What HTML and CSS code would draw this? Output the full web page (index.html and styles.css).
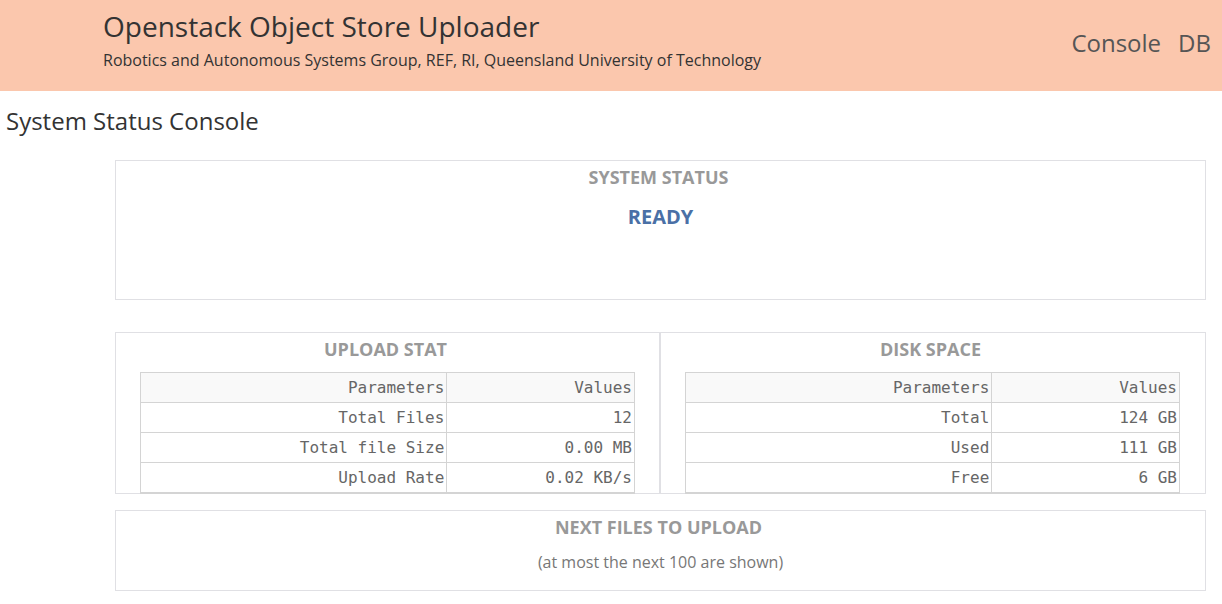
FILE: index.html
```html
<!DOCTYPE html>
<html>
<head>
<meta charset="utf-8">
<link rel="stylesheet" href="styles.css">
</head>
<body>
<header class="topbar">
  <div class="brand">
    <h1 class="brand-title">Openstack Object Store Uploader</h1>
    <p class="brand-sub">Robotics and Autonomous Systems Group, REF, RI, Queensland University of Technology</p>
  </div>
  <nav class="nav">
    <a class="nav-link">Console</a>
    <a class="nav-link">DB</a>
  </nav>
</header>
<main class="page">
  <h2 class="page-title">System Status Console</h2>
  <div class="panels">
    <section class="box status-box">
      <h3 class="box-title">SYSTEM STATUS</h3>
      <div class="status-value">READY</div>
    </section>
    <div class="row">
      <section class="box half">
        <h3 class="box-title">UPLOAD STAT</h3>
        <table class="stat">
          <tr class="head"><td>Parameters</td><td>Values</td></tr>
          <tr><td>Total Files</td><td>12</td></tr>
          <tr><td>Total file Size</td><td>0.00 MB</td></tr>
          <tr><td>Upload Rate</td><td>0.02 KB/s</td></tr>
        </table>
      </section>
      <section class="box half">
        <h3 class="box-title">DISK SPACE</h3>
        <table class="stat">
          <tr class="head"><td>Parameters</td><td>Values</td></tr>
          <tr><td>Total</td><td>124 GB</td></tr>
          <tr><td>Used</td><td>111 GB</td></tr>
          <tr><td>Free</td><td>6 GB</td></tr>
        </table>
      </section>
    </div>
    <section class="box next-box">
      <h3 class="box-title">NEXT FILES TO UPLOAD</h3>
      <p class="note">(at most the next 100 are shown)</p>
    </section>
  </div>
</main>
</body>
</html>
```
FILE: styles.css
```css
* { box-sizing: border-box; }
html, body { margin: 0; padding: 0; background: #fff; }
body { font-family: "Open Sans", "Liberation Sans", sans-serif; color: #333; }

.topbar {
  background: #fbc7ad;
  height: 91px;
  display: flex;
  justify-content: space-between;
  align-items: flex-start;
  padding: 0 12px 0 103px;
}
.brand-title {
  margin: 7px 0 0 0;
  font-size: 28px;
  line-height: 38px;
  font-weight: 400;
  color: #333;
}
.brand-sub {
  margin: 4px 0 0 0;
  font-size: 16px;
  line-height: 22px;
  color: #333;
}
.nav { display: flex; gap: 17px; margin-top: 27px; margin-right: -1px; }
.nav-link { font-size: 24px; line-height: 32px; color: #555; }

.page { padding: 0 16px 0 6px; }
.page-title {
  margin: 0;
  padding-top: 104px;
  margin-top: -91px;
  font-size: 24px;
  line-height: 33px;
  font-weight: 400;
  color: #333;
}
.panels {
  margin: 23px 0 0 109px;
  display: flex;
  flex-direction: column;
}
.box {
  border: 1px solid #e0e0e4;
  text-align: center;
}
.box-title {
  margin: 0;
  padding-right: 4px;
  font-size: 18px;
  line-height: 24px;
  font-weight: 700;
  color: #999;
}
.status-box { height: 140px; padding-top: 4px; }
.status-value {
  margin-top: 14px;
  font-size: 20px;
  line-height: 27px;
  font-weight: 700;
  color: #4a70a6;
}
.row { display: flex; margin-top: 32px; height: 162px; }
.half { flex: 1; padding: 4px 25px 0 24px; }
.half + .half { border-left: 2px solid #e0e0e4; margin-left: -1px; }
.half:first-child { border-right: none; }

.stat {
  margin-top: 11px;
  width: 100%;
  border-collapse: collapse;
  table-layout: fixed;
  font-family: "DejaVu Sans Mono", monospace;
  font-size: 16px;
  color: #666;
}
.stat td {
  border: 1px solid #d4d4d4;
  height: 30px;
  padding: 0 2px 0 0;
  text-align: right;
}
.stat td:first-child { width: 62%; }
.stat tr:last-child td { border-bottom: 2px solid #d4d4d4; }
.stat .head td { background: #f9f9f9; }

.next-box { margin-top: 16px; height: 81px; padding-top: 4px; }
.note { margin: 12px 0 0 0; font-size: 16px; line-height: 22px; color: #777; }
```
